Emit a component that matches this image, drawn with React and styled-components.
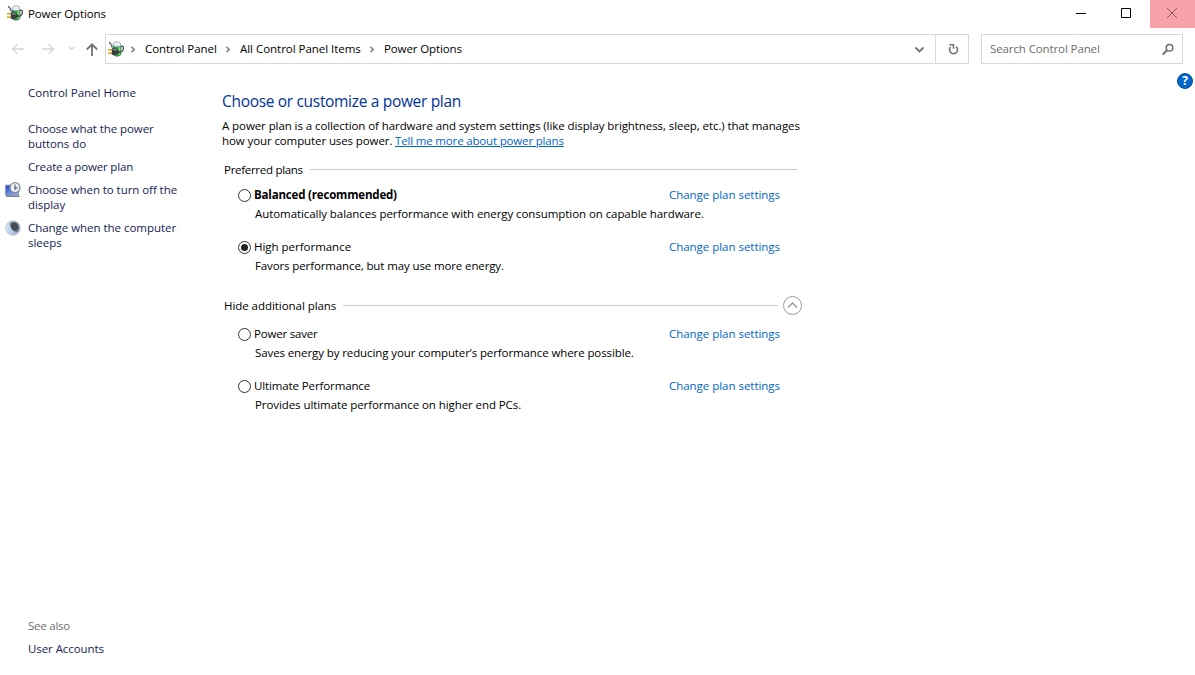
import React from "react";
import styled, { createGlobalStyle } from "styled-components";

const GlobalStyle = createGlobalStyle`
  * { box-sizing: border-box; }
  body {
    margin: 0;
    background: #fff;
    font: 11.5px/15px "Open Sans", "Noto Sans", sans-serif;
    color: #000;
  }
`;

const Window = styled.div`
  display: flex;
  flex-direction: column;
  height: 675px;
  overflow: hidden;
`;

const Text = styled.span`
  display: block;
  white-space: nowrap;
  letter-spacing: ${(p) => p.$track ?? -0.07}px;
`;

const TitleBar = styled.header`
  display: flex;
  height: 28px;
  padding-left: 7px;
`;

const TitleLabel = styled.div`
  display: flex;
  align-items: center;
  gap: 5px;
  flex: 1;
  height: 27px;
`;

const CaptionButton = styled.button`
  display: grid;
  place-items: center;
  width: 45px;
  height: 28px;
  padding: 0 ${(p) => (p.$close ? 1 : 3)}px 2px 0;
  border: 0;
  background: ${(p) => (p.$close ? "#f7a1a9" : "transparent")};
`;

const NavBar = styled.nav`
  display: flex;
  height: 30px;
  margin-top: 6px;
`;

const NavButtons = styled.div`
  width: 105px;
  height: 30px;
`;

const AddressBox = styled.div`
  display: flex;
  align-items: center;
  width: 864px;
  border: 1px solid #d9d9d9;
  padding-left: 2px;
`;

const Crumb = styled.div`
  display: flex;
  align-items: center;
  width: ${(p) => p.$width}px;
  padding-bottom: 1px;
`;

const CrumbArrow = styled.span`
  display: grid;
  place-items: center;
  width: ${(p) => p.$width}px;
  padding-right: ${(p) => (p.$width < 22 ? 3 : 2)}px;
`;

const AddressButton = styled.div`
  display: grid;
  place-items: center;
  width: 33px;
  height: 28px;
  padding-left: 1px;
  border-left: ${(p) => (p.$divided ? "1px solid #d9d9d9" : "0")};
`;

const Spacer = styled.div`
  flex: 1;
`;

const SearchBox = styled.div`
  display: flex;
  align-items: center;
  justify-content: space-between;
  width: 202px;
  margin-left: 12px;
  padding: 0 8px 1px 8px;
  border: 1px solid #d9d9d9;
  color: #6d6d6d;
`;

const Body = styled.div`
  display: flex;
  flex: 1;
`;

const Sidebar = styled.aside`
  display: flex;
  flex-direction: column;
  width: 222px;
  padding: 21px 0 19px 5px;
  color: #151c55;
`;

const Task = styled.a`
  display: flex;
  gap: 7px;
  margin-bottom: ${(p) => p.$gap ?? 8}px;
`;

const TaskIcon = styled.span`
  width: 16px;
  height: 16px;
  margin-bottom: -1px;
`;

const SeeAlso = styled.div`
  margin: auto 0 8px 23px;
  color: #707070;
`;

const Main = styled.main`
  width: 580px;
  padding-top: 26px;
`;

const Heading = styled.h1`
  margin: 0;
  font-size: 15.5px;
  font-weight: 400;
  line-height: 22px;
  color: #003399;
  white-space: nowrap;
  letter-spacing: -0.32px;
`;

const Intro = styled.div`
  margin-top: 6px;
`;

const IntroLine = styled.div`
  display: flex;
`;

const IntroLead = styled(Text)`
  width: 173px;
`;

const Link = styled(Text)`
  color: #0066cc;
  text-decoration: ${(p) => (p.$underlined ? "underline" : "none")};
  text-underline-offset: 1px;
`;

const GroupHeader = styled.div`
  display: flex;
  align-items: center;
  height: 20px;
  margin-top: ${(p) => p.$top}px;
  padding-left: 2px;
`;

const Rule = styled.div`
  flex: 1;
  height: 1px;
  margin: 0 5px 0 7px;
  background: #cbcbcb;
`;

const Plan = styled.div`
  height: 52px;
  padding-left: 16px;
`;

const PlanTop = styled.div`
  display: flex;
  align-items: center;
  height: 15px;
`;

const Radio = styled.span`
  display: grid;
  place-items: center;
  width: 13px;
  height: 13px;
  margin-right: 3px;
  margin-top: 1px;
  border: 1px solid #333;
  border-radius: 50%;
  &::after {
    content: "";
    width: 7px;
    height: 7px;
    border-radius: 50%;
    background: ${(p) => (p.$checked ? "#222" : "transparent")};
  }
`;

const PlanName = styled(Text)`
  width: 415px;
  font-weight: ${(p) => (p.$bold ? 700 : 400)};
`;

const PlanDetail = styled(Text)`
  margin: 4px 0 0 17px;
`;

const Plans = styled.div`
  padding-top: ${(p) => p.$top}px;
`;

const HelpArea = styled.div`
  flex: 1;
  display: flex;
  justify-content: flex-end;
  padding: 9px 2px 0 0;
`;

function PowerIcon() {
  return (
    <svg width="16" height="17" viewBox="0 0 16 17">
      <path d="M5 4.500V13.500Q9 17 13 13.500V4.500Z" fill="#25a03f" stroke="#4d6b52" strokeWidth=".7" />
      <path d="M10.500 6v8l1.800-.8V6Z" fill="#7fe07c" />
      <path d="M5 4.800Q4.800 .8 9 .8T13 4.800Q9 7 5 4.800Z" fill="#eceef6" stroke="#8e90a6" strokeWidth=".7" />
      <path d="M1 1.200Q3.800 3 4 6.500" stroke="#555b61" strokeWidth="1.200" fill="none" />
      <path d="M13 5.500Q15.600 4.500 15.400 7.500 15 11 11 11.300" stroke="#4c5054" strokeWidth="1.300" fill="none" />
      <path d="M0 8.700h4M0 12.200h4" stroke="#dda01a" strokeWidth="1.500" />
      <path d="M3.800 7.500Q7 6.500 9 8.500L11.500 10v2L9 13Q7 15 3.800 13.500Z" fill="#3a3c40" />
      <path d="M5 9Q7 8 8.500 9.600" stroke="#93969a" strokeWidth="1.200" fill="none" />
    </svg>
  );
}

function NavArrows() {
  return (
    <svg width="105" height="30" viewBox="0 0 105 30" fill="none">
      <g stroke="#d5d5d5" strokeWidth="1.4">
        <path d="M24 15H12.5M17.5 10l-5 5 5 5" />
        <path d="M42 15h11.500M48.500 10l5 5-5 5" />
        <path d="M69 13l2.500 2.500 2.500-2.500" />
      </g>
      <path d="M92 22V10.500M86.800 15.500 92 10.300l5.200 5.200" stroke="#747474" strokeWidth="1.8" />
    </svg>
  );
}

function Chevron() {
  return (
    <svg width="6" height="8" viewBox="0 0 6 8" fill="none">
      <path d="M1.500 1.800 4.200 4.500 1.500 7.200" stroke="#7a7a7a" strokeWidth="1.500" />
    </svg>
  );
}

function DisplayIcon() {
  return (
    <svg width="16" height="16" viewBox="0 0 16 16">
      <defs>
        <linearGradient id="screen" x1="0" y1="0" x2="1" y2="1">
          <stop offset="0" stopColor="#1c3fc4" />
          <stop offset="1" stopColor="#a8c4ff" />
        </linearGradient>
      </defs>
      <path d="M.7 3.200h12.800v10H.7Z" fill="url(#screen)" stroke="#7f8db4" />
      <path d="M1 14.300h13.500" stroke="#7a7f8c" strokeWidth="1.400" />
      <circle cx="10" cy="5.700" r="5" fill="#edf1f6" stroke="#858b94" strokeWidth="1.300" />
      <path d="M10 2.500v3.500h2.700M10 6v2" stroke="#445" fill="none" />
    </svg>
  );
}

function SleepIcon() {
  return (
    <svg width="16" height="16" viewBox="0 0 16 16">
      <defs>
        <linearGradient id="moon">
          <stop offset="0" stopColor="#d8e6f6" />
          <stop offset="1" stopColor="#86a4cc" />
        </linearGradient>
        <radialGradient id="shade">
          <stop offset="0.6" stopColor="#454a57" />
          <stop offset="1" stopColor="#6d7482" />
        </radialGradient>
      </defs>
      <circle cx="8" cy="8" r="7.300" fill="url(#moon)" stroke="#c3c8d0" strokeWidth="1" />
      <path d="M5 3Q8 1 11 2.200 14.500 4.500 14 8.500 13.500 11 12 12 8 11.500 6.300 8.500 4.800 5.500 5 3Z" fill="url(#shade)" />
    </svg>
  );
}

const plans = {
  preferred: [
    { name: "Balanced (recommended)", bold: true, track: -0.18, detail: "Automatically balances performance with energy consumption on capable hardware." },
    { name: "High performance", track: -0.02, checked: true, detail: "Favors performance, but may use more energy.", detailTrack: -0.12 },
  ],
  additional: [
    { name: "Power saver", track: -0.2, detail: "Saves energy by reducing your computer’s performance where possible.", detailTrack: -0.1 },
    { name: "Ultimate Performance", track: -0.12, detail: "Provides ultimate performance on higher end PCs.", detailTrack: -0.08 },
  ],
};

function PlanList({ items, top }) {
  return (
    <Plans $top={top}>
      {items.map((plan) => (
        <Plan key={plan.name}>
          <PlanTop>
            <Radio $checked={plan.checked} />
            <PlanName $bold={plan.bold} $track={plan.track}>{plan.name}</PlanName>
            <Link $track={-0.03}>Change plan settings</Link>
          </PlanTop>
          <PlanDetail $track={plan.detailTrack}>{plan.detail}</PlanDetail>
        </Plan>
      ))}
    </Plans>
  );
}

export default function App() {
  return (
    <Window>
      <GlobalStyle />
      <TitleBar>
        <TitleLabel>
          <PowerIcon />
          <Text $track={-0.12}>Power Options</Text>
        </TitleLabel>
        <CaptionButton>
          <svg width="10" height="10"><path d="M0 5.500h10" stroke="#000" /></svg>
        </CaptionButton>
        <CaptionButton>
          <svg width="10" height="10"><path d="M.5.5h9v9h-9Z" stroke="#000" fill="none" /></svg>
        </CaptionButton>
        <CaptionButton $close>
          <svg width="10" height="10"><path d="M0 0l10 10M10 0 0 10" stroke="#8b5a5f" /></svg>
        </CaptionButton>
      </TitleBar>
      <NavBar>
        <NavButtons><NavArrows /></NavButtons>
        <AddressBox>
          <PowerIcon />
          <CrumbArrow $width={21}><Chevron /></CrumbArrow>
          <Crumb $width={72}><Text $track={-0.06}>Control Panel</Text></Crumb>
          <CrumbArrow $width={23}><Chevron /></CrumbArrow>
          <Crumb $width={121}><Text $track={-0.03}>All Control Panel Items</Text></Crumb>
          <CrumbArrow $width={23}><Chevron /></CrumbArrow>
          <Crumb $width={80}><Text $track={-0.12}>Power Options</Text></Crumb>
          <Spacer />
          <AddressButton>
            <svg width="10" height="8" fill="none"><path d="M1.500 2.500l4 4 4-4" stroke="#747474" strokeWidth="1.8" /></svg>
          </AddressButton>
          <AddressButton $divided>
            <svg width="12" height="12" viewBox="0 0 12 12" fill="none">
              <path d="M9 3.600A4 4 0 1 1 3.700 4" stroke="#747474" strokeWidth="1.600" />
              <path d="M2.300 1.800h4.200v4" stroke="#747474" strokeWidth="1.600" />
            </svg>
          </AddressButton>
        </AddressBox>
        <SearchBox>
          <Text $track={-0.11}>Search Control Panel</Text>
          <svg width="12" height="12" viewBox="0 0 12 12" fill="none" stroke="#6d6d6d">
            <circle cx="7.500" cy="4.800" r="3.300" strokeWidth="1.500" />
            <path d="M5 7.300.8 11.500" strokeWidth="2" />
          </svg>
        </SearchBox>
      </NavBar>
      <Body>
        <Sidebar>
          <Task $gap={21}><TaskIcon /><Text $track={-0.01}>Control Panel Home</Text></Task>
          <Task><TaskIcon /><Text>Choose what the power<br />buttons do</Text></Task>
          <Task><TaskIcon /><Text $track={-0.16}>Create a power plan</Text></Task>
          <Task><TaskIcon><DisplayIcon /></TaskIcon><Text $track={-0.06}>Choose when to turn off the<br />display</Text></Task>
          <Task><TaskIcon><SleepIcon /></TaskIcon><Text $track={-0.03}>Change when the computer<br />sleeps</Text></Task>
          <SeeAlso><Text $track={-0.23}>See also</Text></SeeAlso>
          <Task $gap={0}><TaskIcon /><Text>User Accounts</Text></Task>
        </Sidebar>
        <Main>
          <Heading>Choose or customize a power plan</Heading>
          <Intro>
            <Text $track={-0.08}>A power plan is a collection of hardware and system settings (like display brightness, sleep, etc.) that manages</Text>
            <IntroLine>
              <IntroLead $track={-0.1}>how your computer uses power.</IntroLead>
              <Link $underlined $track={-0.165}>Tell me more about power plans</Link>
            </IntroLine>
          </Intro>
          <GroupHeader $top={11}><Text $track={-0.29}>Preferred plans</Text><Rule /></GroupHeader>
          <PlanList items={plans.preferred} top={8} />
          <GroupHeader $top={4}>
            <Text $track={-0.05}>Hide additional plans</Text>
            <Rule />
            <svg width="19" height="19" viewBox="0 0 19 19" fill="none" stroke="#999">
              <circle cx="9.500" cy="9.500" r="9" />
              <path d="M5 11.500 9.500 7l4.500 4.500" strokeWidth="1.500" />
            </svg>
          </GroupHeader>
          <PlanList items={plans.additional} top={11} />
        </Main>
        <HelpArea>
          <svg width="16" height="16" viewBox="0 0 16 16">
            <circle cx="8" cy="8" r="7.500" fill="#0067c8" stroke="#084c91" />
            <text x="8" y="12.300" fill="#fff" fontSize="12" fontWeight="700" textAnchor="middle">?</text>
          </svg>
        </HelpArea>
      </Body>
    </Window>
  );
}
